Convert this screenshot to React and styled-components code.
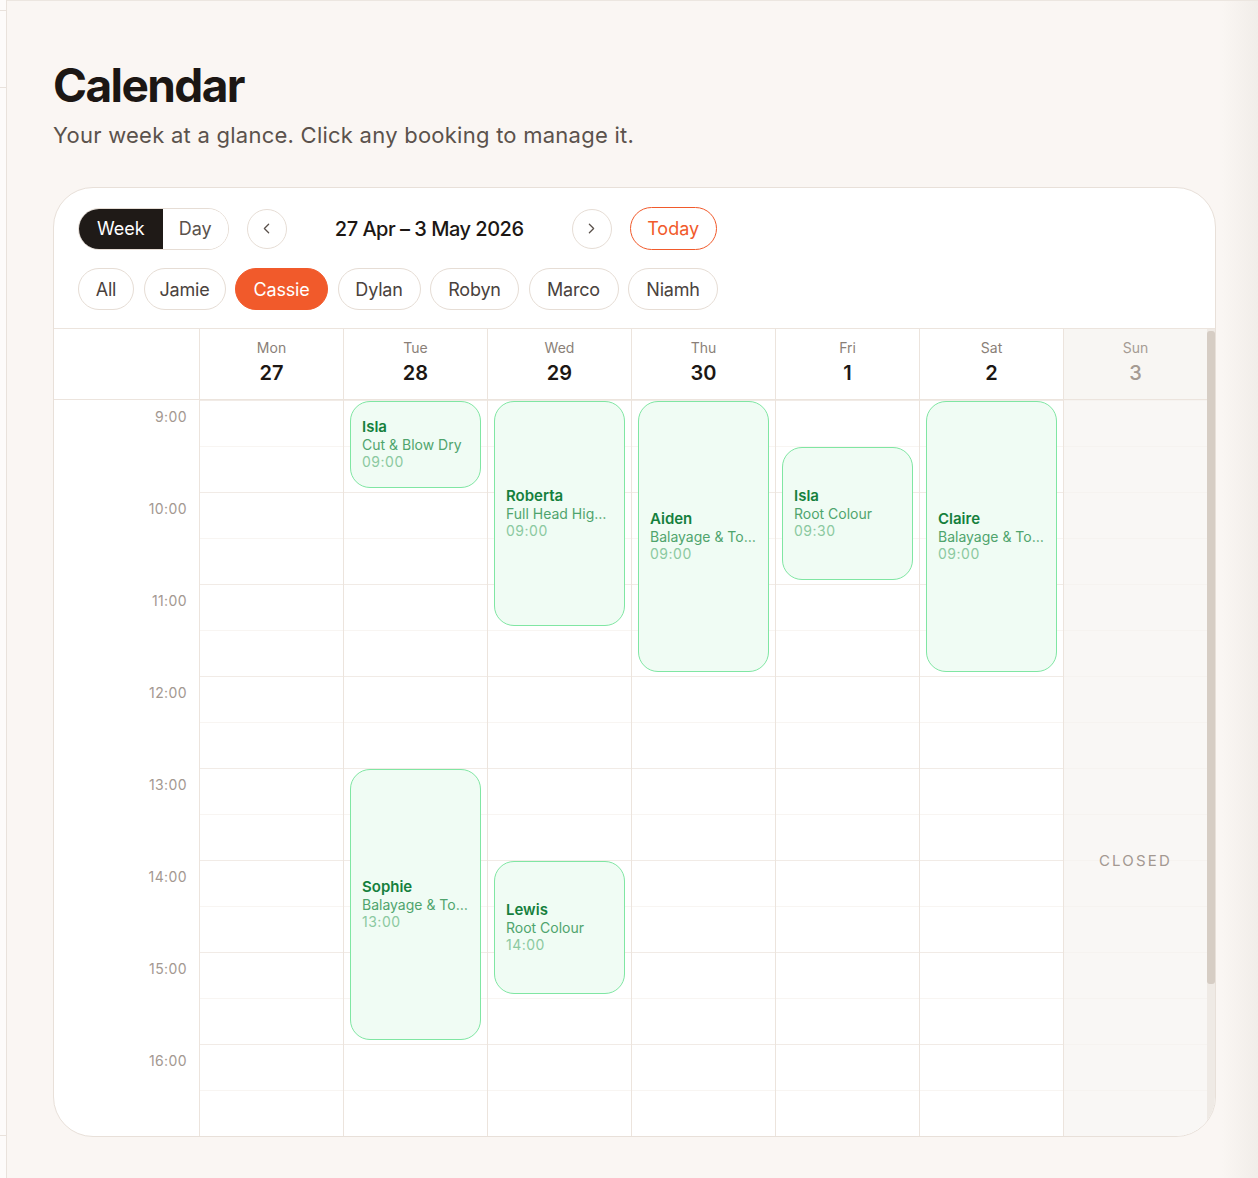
import React, {useState} from 'react'
import styled, {createGlobalStyle} from 'styled-components';
import {ChevronLeft, ChevronRight} from 'lucide-react';

const HOUR = 92;
const FIRST_HOUR = 9;
const HOURS = [9, 10, 11, 12, 13, 14, 15, 16, 17, 18];
const VIEW_H = 807;
const HEAD_H = 71;

const GlobalStyle = createGlobalStyle`
    html, body {
        margin: 0;
        padding: 0;
    }
    body {
        font-family: Inter, "Noto Sans", sans-serif;
        color: #1c1714;
        background: linear-gradient(to right, #faf6f3 0, #faf6f3 1222px, #f1ede9 100%);
    }
    * {
        box-sizing: border-box;
    }
`;

const Shell = styled.div`
    display: flex;
    min-height: 1178px;
`;

const Rail = styled.aside`
    width: 7px;
    flex: none;
    background: #fdfbfa;
    border-right: 1px solid #e9e2dc;
`;

const RailBlock = styled.div`
    height: ${p => p.h}px;
    border-bottom: 1px solid #e9e2dc;
`;

const Main = styled.main`
    flex: 1;
    border-top: 1px solid #ece6e0;
    padding: 61px 42px 40px 46px;
`;

const Title = styled.h1`
    margin: 0;
    font-size: 46px;
    line-height: 46px;
    font-weight: 700;
    letter-spacing: -1.6px;
    color: #1c1714;
`;

const Subtitle = styled.p`
    margin: 13px 0 0;
    font-size: 22px;
    line-height: 29px;
    letter-spacing: 0.25px;
    color: #5b524c;
`;

const Card = styled.section`
    margin-top: 37px;
    background: #fff;
    border: 1px solid #e8e0d9;
    border-radius: 40px;
    overflow: hidden;
`;

const Toolbar = styled.div`
    display: flex;
    flex-direction: column;
    gap: 18px;
    padding: 19px 24px 18px;
    border-bottom: 1px solid #ece4dd;
`;

const ToolRow = styled.div`
    display: flex;
    align-items: center;
    gap: ${p => p.gap || 18}px;
`;

const Segment = styled.div`
    display: flex;
    height: 42px;
    border: 1px solid #e6ddd5;
    border-radius: 999px;
    overflow: hidden;
`;

const SegButton = styled.button`
    border: 0;
    padding: 0 ${p => p.pad}px;
    font: inherit;
    font-size: 18px;
    background: ${p => p.active ? '#1f1a17' : '#fff'};
    color: ${p => p.active ? '#fff' : '#5b524c'};
    cursor: pointer;
`;

const NavButton = styled.button`
    width: 40px;
    height: 40px;
    border: 1px solid #e6ddd5;
    border-radius: 50%;
    background: #fff;
    color: #5b524c;
    display: flex;
    align-items: center;
    justify-content: center;
    padding: 0;
    cursor: pointer;
`;

const RangeLabel = styled.div`
    width: 249px;
    text-align: center;
    font-size: 20px;
    font-weight: 500;
    letter-spacing: -0.5px;
    color: #1c1714;
`;

const TodayButton = styled.button`
    height: 43px;
    width: 87px;
    padding: 0;
    border: 1.5px solid #f15a2b;
    border-radius: 999px;
    background: #fff;
    color: #f15a2b;
    font: inherit;
    font-size: 18px;
    cursor: pointer;
`;

const Chip = styled.button`
    height: 42px;
    width: ${p => p.w}px;
    padding: 0;
    border: 1px solid ${p => p.active ? '#f15a2b' : '#e6ddd5'};
    border-radius: 999px;
    background: ${p => p.active ? '#f15a2b' : '#fff'};
    color: ${p => p.active ? '#fff' : '#4a423d'};
    font: inherit;
    font-size: 18px;
    letter-spacing: -0.2px;
    cursor: pointer;
`;

const GridArea = styled.div`
    position: relative;
`;

const Scroller = styled.div`
    height: ${VIEW_H}px;
    overflow-y: auto;
    scrollbar-width: none;
    &::-webkit-scrollbar {
        display: none;
    }
`;

const ScrollTrack = styled.div`
    position: absolute;
    top: 0;
    right: 0;
    bottom: 0;
    width: 8px;
    z-index: 4;
    background: #efeae5;
`;

const ScrollThumb = styled.div`
    margin-top: 2px;
    width: 100%;
    background: #d6cdc4;
    border-radius: 3px;
`;

const Columns = styled.div`
    display: grid;
    grid-template-columns: 146px repeat(6, 144px) 1fr;
    padding-right: 8px;
`;

const HeadRow = styled(Columns)`
    position: sticky;
    top: 0;
    z-index: 3;
    background: #fff;
    height: ${HEAD_H}px;
    border-bottom: 1px solid #ece4dd;
`;

const HeadCell = styled.div`
    display: flex;
    flex-direction: column;
    align-items: center;
    padding-top: 10px;
    background: ${p => p.closed ? '#f8f6f3' : '#fff'};
    border-right: ${p => p.last ? 'none' : '1px solid #ece4dd'};
`;

const DayName = styled.div`
    font-size: 14px;
    line-height: 18px;
    color: ${p => p.closed ? '#a59b93' : '#8a7f78'};
`;

const DayNum = styled.div`
    margin-top: 3px;
    font-size: 20px;
    line-height: 26px;
    font-weight: ${p => p.closed ? 500 : 600};
    color: ${p => p.closed ? '#a59b93' : '#1c1714'};
`;

const TimeCol = styled.div`
    border-right: 1px solid #ece4dd;
`;

const TimeCell = styled.div`
    height: ${HOUR}px;
    padding: 8px 12px 0 0;
    text-align: right;
    font-size: 14px;
    line-height: 18px;
    letter-spacing: 0.4px;
    color: #a39891;
`;

const DayCol = styled.div`
    position: relative;
    background: ${p => p.closed ? '#f9f7f5' : '#fff'};
    border-right: ${p => p.last ? 'none' : '1px solid #ece4dd'};
`;

const Slot = styled.div`
    height: ${HOUR / 2}px;
    border-top: 1px solid ${p => p.closed ? '#f6f3f0' : (p.half ? '#f8f5f2' : '#f1ebe6')};
`;

const ClosedLabel = styled.div`
    position: absolute;
    inset: 0;
    display: flex;
    align-items: center;
    justify-content: center;
    font-size: 15px;
    letter-spacing: 2.2px;
    color: #a39891;
`;

const Booking = styled.div`
    position: absolute;
    left: 6px;
    right: 6px;
    display: flex;
    flex-direction: column;
    justify-content: center;
    padding: 0 11px;
    background: #f0fcf4;
    border: 1.5px solid #80e6a3;
    border-radius: 20px;
    cursor: pointer;
    overflow: hidden;
`;

const Client = styled.div`
    font-size: 15px;
    line-height: 18px;
    font-weight: 600;
    color: #15803d;
`;

const Service = styled.div`
    font-size: 14px;
    line-height: 17px;
    color: #4fa46d;
    white-space: nowrap;
    overflow: hidden;
    text-overflow: ellipsis;
`;

const When = styled.div`
    font-size: 14px;
    line-height: 18px;
    letter-spacing: 0.5px;
    color: #8bc9a0;
`;

const days = [
    {name: 'Mon', num: 27},
    {name: 'Tue', num: 28},
    {name: 'Wed', num: 29},
    {name: 'Thu', num: 30},
    {name: 'Fri', num: 1},
    {name: 'Sat', num: 2},
    {name: 'Sun', num: 3, closed: true},
];

const bookings = [
    {day: 1, client: 'Isla', service: 'Cut & Blow Dry', time: '09:00', start: 9, dur: 1},
    {day: 1, client: 'Sophie', service: 'Balayage & Toner', time: '13:00', start: 13, dur: 3},
    {day: 2, client: 'Roberta', service: 'Full Head Highlights', time: '09:00', start: 9, dur: 2.5},
    {day: 2, client: 'Lewis', service: 'Root Colour', time: '14:00', start: 14, dur: 1.5},
    {day: 3, client: 'Aiden', service: 'Balayage & Toner', time: '09:00', start: 9, dur: 3},
    {day: 4, client: 'Isla', service: 'Root Colour', time: '09:30', start: 9.5, dur: 1.5},
    {day: 5, client: 'Claire', service: 'Balayage & Toner', time: '09:00', start: 9, dur: 3},
];

const stylists = [
    {name: 'All', w: 56},
    {name: 'Jamie', w: 82},
    {name: 'Cassie', w: 93},
    {name: 'Dylan', w: 83},
    {name: 'Robyn', w: 89},
    {name: 'Marco', w: 90},
    {name: 'Niamh', w: 90},
];

const App = () => {
    const [view, setView] = useState('week')
    const [stylist, setStylist] = useState('Cassie')

    // thumb size follows how much of the day grid is visible
    const totalH = HEAD_H + HOURS.length * HOUR;
    const thumbH = Math.round(VIEW_H * VIEW_H / totalH) - 4;

    return (
        <Shell>
            <GlobalStyle />
            <Rail>
                <RailBlock h={11} />
                <RailBlock h={77} />
                <RailBlock h={1048} />
            </Rail>
            <Main>
                <Title>Calendar</Title>
                <Subtitle>Your week at a glance. Click any booking to manage it.</Subtitle>
                <Card>
                    <Toolbar>
                        <ToolRow>
                            <Segment>
                                <SegButton pad={18} active={view === 'week'} onClick={() => setView('week')}>Week</SegButton>
                                <SegButton pad={16} active={view === 'day'} onClick={() => setView('day')}>Day</SegButton>
                            </Segment>
                            <NavButton aria-label="Previous week"><ChevronLeft size={17} strokeWidth={1.8} /></NavButton>
                            <RangeLabel>27 Apr – 3 May 2026</RangeLabel>
                            <NavButton aria-label="Next week"><ChevronRight size={17} strokeWidth={1.8} /></NavButton>
                            <TodayButton>Today</TodayButton>
                        </ToolRow>
                        <ToolRow gap={9.5}>
                            {stylists.map(s => (
                                <Chip
                                key={s.name}
                                w={s.w}
                                active={stylist === s.name}
                                onClick={() => setStylist(s.name)}
                                >{s.name}</Chip>
                            ))}
                        </ToolRow>
                    </Toolbar>
                    <GridArea>
                        <Scroller>
                            <HeadRow>
                                <HeadCell />
                                {days.map((d, i) => (
                                    <HeadCell key={d.name} closed={d.closed} last={i === days.length - 1}>
                                        <DayName closed={d.closed}>{d.name}</DayName>
                                        <DayNum closed={d.closed}>{d.num}</DayNum>
                                    </HeadCell>
                                ))}
                            </HeadRow>
                            <Columns>
                                <TimeCol>
                                    {HOURS.map(h => <TimeCell key={h}>{h}:00</TimeCell>)}
                                </TimeCol>
                                {days.map((d, i) => (
                                    <DayCol key={d.name} closed={d.closed} last={i === days.length - 1}>
                                        {HOURS.flatMap(h => [
                                            <Slot key={h + 'a'} closed={d.closed} />,
                                            <Slot key={h + 'b'} closed={d.closed} half />,
                                        ])}
                                        {d.closed && <ClosedLabel>CLOSED</ClosedLabel>}
                                        {bookings.filter(b => b.day === i).map(b => (
                                            <Booking
                                            key={b.client + b.time}
                                            style={{top: (b.start - FIRST_HOUR) * HOUR + 1, height: b.dur * HOUR - 5}}
                                            >
                                                <Client>{b.client}</Client>
                                                <Service>{b.service}</Service>
                                                <When>{b.time}</When>
                                            </Booking>
                                        ))}
                                    </DayCol>
                                ))}
                            </Columns>
                        </Scroller>
                        <ScrollTrack>
                            <ScrollThumb style={{height: thumbH}} />
                        </ScrollTrack>
                    </GridArea>
                </Card>
            </Main>
        </Shell>
    )
}

export default App
